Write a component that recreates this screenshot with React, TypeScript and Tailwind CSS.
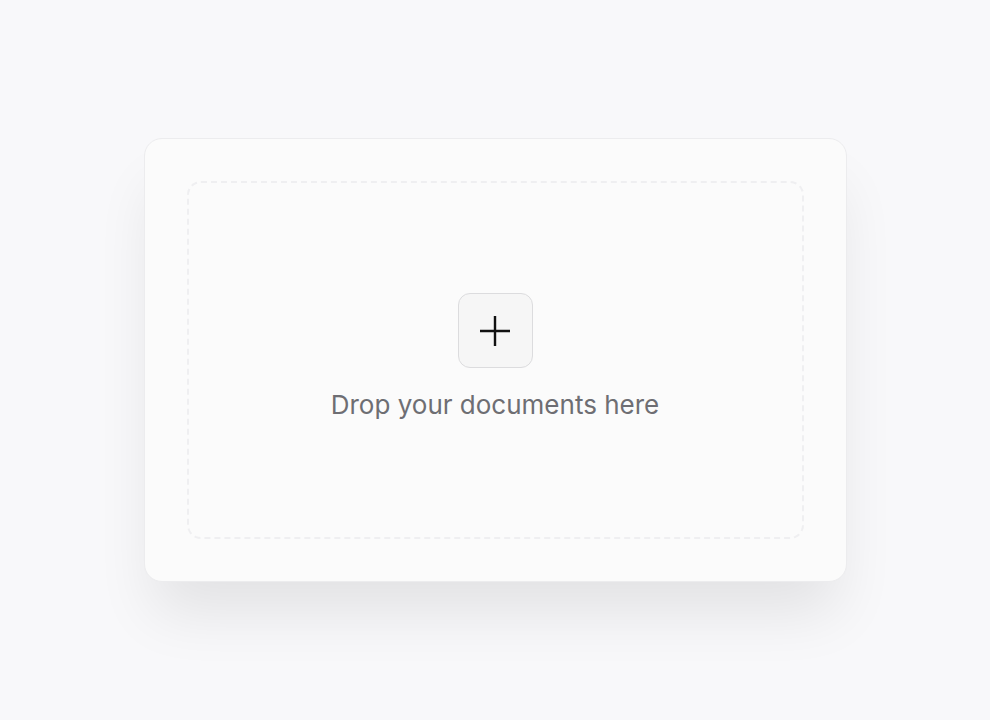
export default function App() {
  return (
    <div
      className="flex h-[720px] w-full items-center justify-center bg-[#f8f8fa]"
      style={{ fontFamily: "Inter, 'Noto Sans', sans-serif" }}
    >
      <div className="h-[444px] w-[703px] rounded-[18px] border border-[#ececee] bg-[#fbfbfb] p-[42px] shadow-[0_40px_60px_-10px_rgba(0,0,0,0.09)]">
        <div className="flex h-full w-full flex-col items-center justify-center gap-[21px] rounded-[14px] border-2 border-dashed border-[#efeff1] pb-[6px]">
          <button className="flex h-[75px] w-[75px] items-center justify-center rounded-[12px] border border-[#dcdcde] bg-[#f6f6f6]">
            <svg width="40" height="40" viewBox="0 0 24 24" fill="none" stroke="#111" strokeWidth={1.45}>
              <path d="M12 3v18M3 12h18" />
            </svg>
          </button>
          <p className="text-[26px] leading-8 text-[#6e6e73]">Drop your documents here</p>
        </div>
      </div>
    </div>
  );
}
